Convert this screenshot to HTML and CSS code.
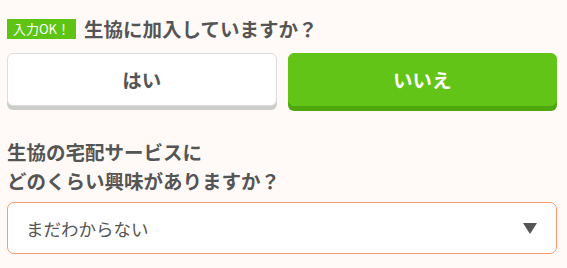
FILE: index.html
```html
<!DOCTYPE html>
<html lang="ja">
<head>
<meta charset="utf-8">
<link rel="stylesheet" href="styles.css">
</head>
<body>
<div class="page">
  <div class="q-head">
    <span class="badge">入力OK！</span>
    <span class="q-title">生協に加入していますか？</span>
  </div>
  <div class="choices">
    <button class="choice choice-off">はい</button>
    <button class="choice choice-on">いいえ</button>
  </div>
  <div class="q2">生協の宅配サービスに<br>どのくらい興味がありますか？</div>
  <div class="select">
    <span class="select-text">まだわからない</span>
    <span class="arrow"></span>
  </div>
</div>
</body>
</html>
```
FILE: styles.css
```css
html, body {
  margin: 0;
  padding: 0;
  background: #fffaf7;
}
body {
  font-family: "Noto Sans CJK JP", "Noto Sans", sans-serif;
  color: #555555;
}
.page {
  padding: 15px 10px 0 7px;
}
.q-head {
  display: flex;
  align-items: center;
  height: 28px;
  gap: 8px;
}
.badge {
  display: inline-flex;
  align-items: center;
  justify-content: center;
  width: 69px;
  height: 20px;
  background: #5ec414;
  color: #ffffff;
  font-size: 13px;
  line-height: 20px;
}
.q-title {
  font-size: 19.5px;
  font-weight: bold;
  line-height: 28px;
}
.choices {
  display: flex;
  gap: 11px;
  margin-top: 10px;
}
.choice {
  flex: 1;
  height: 53px;
  border-radius: 6px;
  font-family: inherit;
  font-size: 19.5px;
  font-weight: bold;
  padding: 0;
  cursor: pointer;
}
.choice-off {
  background: #ffffff;
  border: 1px solid #dddddd;
  color: #555555;
  box-shadow: 0 4px 0 #cccccc;
}
.choice-on {
  background: #62c416;
  border: 1px solid #62c416;
  color: #ffffff;
  box-shadow: 0 5px 0 #4ea70d;
}
.q2 {
  margin-top: 31px;
  font-size: 19.5px;
  font-weight: bold;
  line-height: 29px;
}
.select {
  margin-top: 7px;
  height: 50px;
  border: 1px solid #f89a6c;
  border-radius: 7px;
  background: #ffffff;
  display: flex;
  align-items: center;
  justify-content: space-between;
  padding: 0 19px 0 18px;
}
.select-text {
  font-size: 17.5px;
  color: #555555;
}
.arrow {
  width: 0;
  height: 0;
  border-left: 7.5px solid transparent;
  border-right: 7.5px solid transparent;
  border-top: 11px solid #555555;
}
```
